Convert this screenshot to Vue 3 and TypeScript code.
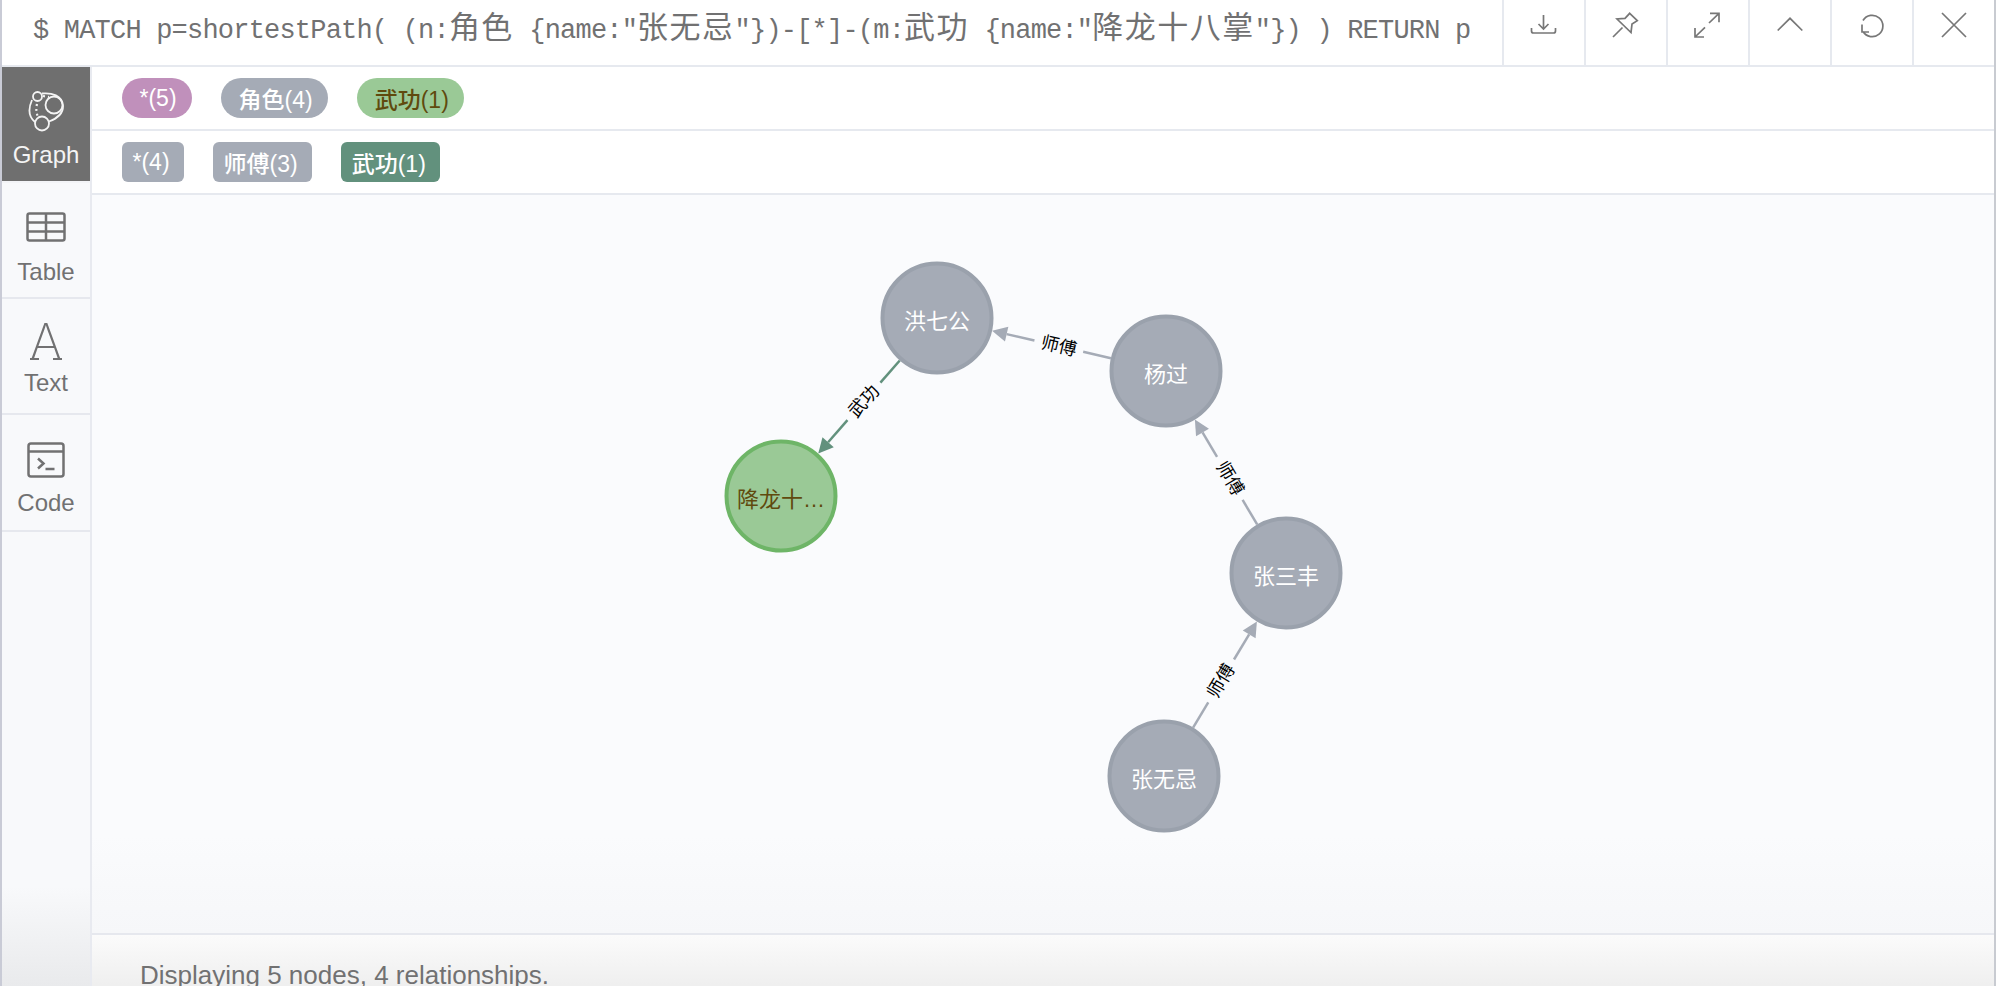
<template>
  <div class="frame">
    <!-- 顶部查询栏 -->
    <header class="topbar">
      <div class="query">$ MATCH p=shortestPath( (n:<span class="cjk">角色</span> {name:"<span class="cjk">张无忌</span>"})-[*]-(m:<span class="cjk">武功</span> {name:"<span class="cjk">降龙十八掌</span>"}) ) RETURN p</div>
      <button class="tool">
        <svg width="32" height="32" viewBox="0 0 32 32"><path d="M3.500 19v3q0 2 2 2h20q2 0 2-2v-3M15.500 6v14M10.500 15l5 5 5-5" /></svg>
      </button>
      <button class="tool">
        <svg width="32" height="32" viewBox="0 0 32 32"><path d="M3 28l9.500-9.500M19.700 4.300l7.600 7.400-5.300 3.400-1 8.400L7 10l8-.6z" /></svg>
      </button>
      <button class="tool">
        <svg width="32" height="32" viewBox="0 0 32 32"><path d="M17 14L27 4.300M18 4.300h9v9M13 18.300L3 28M3 19v9h9" /></svg>
      </button>
      <button class="tool">
        <svg width="32" height="32" viewBox="0 0 32 32"><path d="M3.700 21.500L16 9.300l12.300 12.200" /></svg>
      </button>
      <button class="tool">
        <svg width="32" height="32" viewBox="0 0 32 32"><path d="M7 22.500A10.700 10.700 0 1 0 7 11.500M6 15.500v7.500h7" /></svg>
      </button>
      <button class="tool">
        <svg width="32" height="32" viewBox="0 0 32 32"><path d="M4 4l24 24M28 4L4 28" /></svg>
      </button>
    </header>

    <div class="body">
      <!-- 左侧视图切换 -->
      <nav class="side">
        <div class="tab tab--active tab--graph">
          <svg width="40" height="44" viewBox="0 0 40 44">
            <circle cx="11.500" cy="6.500" r="4.500" />
            <circle cx="28" cy="15" r="8.500" />
            <circle cx="16" cy="33.500" r="7" />
            <path d="M16 3.500c10-1 20 2 21 12 .5 8-6 13-14 16M9 32C3 27 2 19 6 10" />
            <path class="dots" d="M17 6l6 1M11 14c-1 4-1 8 1 13" />
          </svg>
          <span class="tab__label">Graph</span>
        </div>
        <div class="tab tab--table">
          <svg width="40" height="30" viewBox="0 0 40 30">
            <rect x="1.500" y="1.500" width="37" height="27" rx="2" />
            <path d="M1.500 10.500h37M1.500 19.500h37M20 1.500v27" />
          </svg>
          <span class="tab__label">Table</span>
        </div>
        <div class="tab tab--text">
          <span class="glyph">A</span>
          <span class="tab__label">Text</span>
        </div>
        <div class="tab tab--code">
          <svg width="38" height="36" viewBox="0 0 38 36">
            <rect x="1.500" y="1.500" width="35" height="33" rx="2.500" />
            <path d="M1.500 9.500h35M11 16.500l5.500 5-5.500 5M18.500 27h9" />
          </svg>
          <span class="tab__label">Code</span>
        </div>
      </nav>

      <main class="main">
        <div class="chips">
          <span v-for="c in nodeChips" :key="c.text" class="chip chip--pill" :class="c.cls">{{ c.text }}</span>
        </div>
        <div class="chips">
          <span v-for="c in relChips" :key="c.text" class="chip chip--tag" :class="c.cls">{{ c.text }}</span>
        </div>

        <!-- 关系图：坐标就是内容本身 -->
        <div class="canvas">
          <svg class="graph" width="1902" height="738" viewBox="92 195 1902 738">
            <g v-for="e in edges" :key="e.label + e.tipX" :class="e.cls">
              <line class="edge" :x1="e.x1" :y1="e.y1" :x2="e.x2" :y2="e.y2" />
              <line class="edge" :x1="e.x3" :y1="e.y3" :x2="e.x4" :y2="e.y4" />
              <polygon class="head" :points="e.head" />
              <text class="edge-label" :transform="e.labelTransform">{{ e.label }}</text>
            </g>
            <g v-for="n in nodes" :key="n.id" :class="{ 'node--green': n.green }">
              <circle class="node" :cx="n.x" :cy="n.y" r="54.500" />
              <text class="node-label" :x="n.x" :y="n.y + 11">{{ n.name }}</text>
            </g>
          </svg>
        </div>

        <footer class="status">Displaying 5 nodes, 4 relationships.</footer>
      </main>
    </div>
  </div>
</template>

<script setup lang="ts">
interface GraphNode {
  id: string
  name: string
  x: number
  y: number
  green?: boolean
}

const nodeChips = [
  { text: '*(5)', cls: 'c-purple' },
  { text: '角色(4)', cls: 'c-gray' },
  { text: '武功(1)', cls: 'c-green' }
]

const relChips = [
  { text: '*(4)', cls: 'c-gray' },
  { text: '师傅(3)', cls: 'c-gray' },
  { text: '武功(1)', cls: 'c-teal' }
]

const nodes: GraphNode[] = [
  { id: 'hong', name: '洪七公', x: 937, y: 318 },
  { id: 'yang', name: '杨过', x: 1166, y: 371 },
  { id: 'san', name: '张三丰', x: 1286, y: 573 },
  { id: 'wu', name: '张无忌', x: 1164, y: 776 },
  { id: 'xl', name: '降龙十…', x: 781, y: 496, green: true }
]

const RADIUS = 56.5
const HEAD = 15
const GAP = 25

function makeEdge(fromId: string, toId: string, label: string, cls: string) {
  const a = nodes.find((n) => n.id === fromId)!
  const b = nodes.find((n) => n.id === toId)!
  const len = Math.hypot(b.x - a.x, b.y - a.y)
  const ux = (b.x - a.x) / len
  const uy = (b.y - a.y) / len
  const sx = a.x + ux * RADIUS
  const sy = a.y + uy * RADIUS
  const tipX = b.x - ux * RADIUS
  const tipY = b.y - uy * RADIUS
  const baseX = tipX - ux * HEAD
  const baseY = tipY - uy * HEAD
  // 标签在线段（不含箭头）的中点
  const mx = (sx + baseX) / 2
  const my = (sy + baseY) / 2
  let angle = (Math.atan2(uy, ux) * 180) / Math.PI
  if (angle > 90) angle -= 180
  if (angle < -90) angle += 180
  const px = -uy * 7.5
  const py = ux * 7.5
  return {
    label,
    cls,
    tipX,
    x1: sx,
    y1: sy,
    x2: mx - ux * GAP,
    y2: my - uy * GAP,
    x3: mx + ux * GAP,
    y3: my + uy * GAP,
    x4: baseX,
    y4: baseY,
    head: `${tipX},${tipY} ${baseX + px},${baseY + py} ${baseX - px},${baseY - py}`,
    labelTransform: `translate(${mx} ${my}) rotate(${angle})`
  }
}

const edges = [
  makeEdge('yang', 'hong', '师傅', 'edge--gray'),
  makeEdge('san', 'yang', '师傅', 'edge--gray'),
  makeEdge('wu', 'san', '师傅', 'edge--gray'),
  makeEdge('hong', 'xl', '武功', 'edge--teal')
]
</script>

<style>
html,
body {
  margin: 0;
  overflow: hidden;
}
</style>

<style scoped>
.frame {
  width: 1996px;
  height: 986px;
  box-sizing: border-box;
  border-left: 2px solid #c9cbd6;
  border-right: 2px solid #c8cbd1;
  background: #fff;
  display: flex;
  flex-direction: column;
  overflow: hidden;
  font-family: "Liberation Sans", "Noto Sans CJK SC", sans-serif;
}

.topbar {
  height: 67px;
  flex: none;
  box-sizing: border-box;
  border-bottom: 2px solid #e6e9ef;
  display: flex;
}

.query {
  flex: 1;
  min-width: 0;
  overflow: hidden;
  padding-left: 31px;
  white-space: pre;
  font-family: "Liberation Mono", "Noto Sans CJK SC", monospace;
  font-size: 27px;
  line-height: 63px;
  letter-spacing: -0.8px;
  color: #717172;
}

.cjk {
  font-family: "Noto Sans CJK SC", sans-serif;
  font-size: 31px;
  line-height: 1;
  letter-spacing: 1.500px;
}

.tool {
  width: 82px;
  flex: none;
  padding: 9px 0 0;
  background: none;
  border: 0;
  border-left: 2px solid #e6e9ef;
  display: flex;
  align-items: flex-start;
  justify-content: center;
}

.tool svg {
  fill: none;
  stroke: #777;
  stroke-width: 1.700;
}

.body {
  flex: 1;
  display: flex;
  min-height: 0;
}

.side {
  width: 90px;
  flex: none;
  box-sizing: border-box;
  border-right: 2px solid #e8eaf0;
  background: linear-gradient(#f8f9fb 0, #f8f9fb 820px, #e9eaec 919px);
}

.tab {
  box-sizing: border-box;
  border-bottom: 2px solid #e6e8ee;
  display: flex;
  flex-direction: column;
  align-items: center;
  color: #717172;
}

.tab svg {
  fill: none;
  stroke: #717172;
  stroke-width: 2.500;
}

.tab__label {
  font-size: 24px;
  line-height: 28px;
}

.tab--active {
  background: #6f6f6f;
  border-bottom-color: #f3f4f7;
  color: #f4f4f4;
}

.tab--graph {
  height: 116px;
  padding-top: 23px;
  gap: 7px;
}

.tab--graph svg {
  stroke: #f4f4f4;
  stroke-width: 1.800;
}

.tab--graph .dots {
  stroke-width: 2.200;
  stroke-dasharray: 2 3;
}

.tab--table {
  height: 116px;
  padding-top: 29px;
  gap: 16px;
}

.tab--text {
  height: 116px;
  padding-top: 16px;
}

/* A 的衬线脚用两个小横条补上 */
.glyph {
  position: relative;
  font-family: Inter, "Liberation Sans", sans-serif;
  font-weight: 200;
  font-size: 50px;
  line-height: 54px;
}

.glyph::before,
.glyph::after {
  content: "";
  position: absolute;
  bottom: 9px;
  width: 9px;
  height: 2px;
  background: #717172;
}

.glyph::before {
  left: calc(50% - 16px);
}

.glyph::after {
  left: calc(50% + 7px);
}

.tab--code {
  height: 117px;
  padding-top: 27px;
  gap: 11px;
}

.main {
  flex: 1;
  min-width: 0;
  display: flex;
  flex-direction: column;
}

.chips {
  height: 64px;
  flex: none;
  box-sizing: border-box;
  border-bottom: 2px solid #e6e9ef;
  padding-left: 30px;
  display: flex;
  align-items: center;
  gap: 29.500px;
}

.chip {
  height: 40px;
  display: inline-flex;
  align-items: center;
  font-size: 23px;
  font-weight: 500;
}

.chip--pill {
  border-radius: 20px;
  padding: 0 15px 0 17.500px;
}

.chip--tag {
  border-radius: 6px;
  padding: 0 14px 0 10.500px;
}

.c-purple {
  background: #c090bb;
  color: #fff;
}

.c-gray {
  background: #a5abb6;
  color: #fff;
}

.c-green {
  background: #9ac996;
  color: #604a0e;
}

.c-teal {
  background: #62917d;
  color: #fff;
}

.canvas {
  height: 738px;
  flex: none;
  background: linear-gradient(#fafbfd 0, #fafbfd 640px, #f6f7f9 738px);
}

.graph {
  display: block;
}

.edge {
  stroke-width: 2.500;
}

.edge--gray .edge {
  stroke: #a5abb6;
}

.edge--gray .head {
  fill: #a5abb6;
}

.edge--teal .edge {
  stroke: #62917d;
}

.edge--teal .head {
  fill: #62917d;
}

.edge-label {
  font-size: 18px;
  fill: #000;
  text-anchor: middle;
  dominant-baseline: central;
}

.node {
  fill: #a5abb6;
  stroke: #9aa1ac;
  stroke-width: 4;
}

.node-label {
  font-size: 22px;
  fill: #fff;
  text-anchor: middle;
}

.node--green .node {
  fill: #9ac996;
  stroke: #6eb567;
}

.node--green .node-label {
  fill: #604a0e;
}

.status {
  flex: 1;
  box-sizing: border-box;
  border-top: 2px solid #e6e8ee;
  background: linear-gradient(#fbfbfb, #eeeeee);
  padding: 26px 0 0 48px;
  font-size: 26px;
  line-height: 28px;
  color: #717172;
}
</style>
